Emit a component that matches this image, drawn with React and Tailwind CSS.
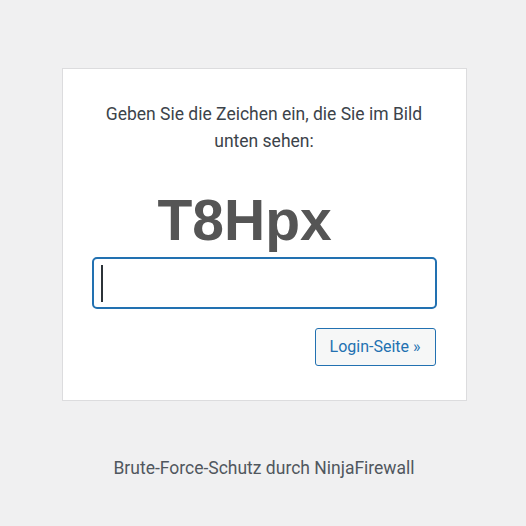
import React from 'react';

export default function App() {
  return (
    <div className="min-h-[526px] w-full bg-[#f0f0f1] flex flex-col items-center pt-[68px] pl-[2px]" style={{ fontFamily: 'Roboto, "Liberation Sans", sans-serif' }}>
      <div className="w-[405px] h-[333px] bg-white border border-[#dcdcde] px-[29px] pt-[32px]">
        <p className="text-center text-[17.5px] leading-[27px] text-[#3c434a] px-[8px]">
          Geben Sie die Zeichen ein, die Sie im Bild unten sehen:
        </p>
        <div className="h-[94px] flex items-end pl-[66px]">
          <span className="text-[57px] leading-none font-bold text-[#555555]" style={{ fontFamily: '"Liberation Sans", Arial, sans-serif' }}>
            T8Hpx
          </span>
        </div>
        <div className="mt-[8px] h-[52px] w-[345px] rounded-[5px] border-2 border-[#2271b1] flex items-center pl-[7px]">
          <div className="w-[2px] h-[37px] bg-[#2c3338]"></div>
        </div>
        <div className="flex justify-end mt-[19px] pr-[1px]">
          <button className="h-[38px] px-[14px] rounded-[3px] border border-[#2271b1] bg-[#f6f7f7] text-[#2271b1] text-[16px]">
            Login-Seite »
          </button>
        </div>
      </div>
      <p className="mt-[54px] text-[17.5px] text-[#50575e]">Brute-Force-Schutz durch NinjaFirewall</p>
    </div>
  );
}
